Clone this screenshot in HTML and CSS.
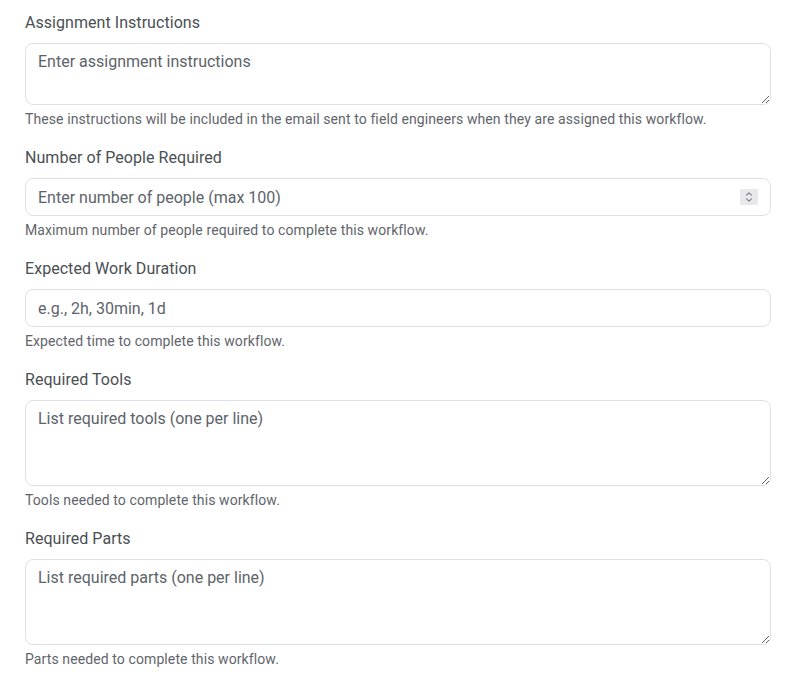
FILE: index.html
```html
<!DOCTYPE html>
<html lang="en">
<head>
<meta charset="utf-8">
<title>Workflow assignment</title>
<link rel="stylesheet" href="styles.css">
</head>
<body>
<form class="form">
  <div class="group">
    <label class="label" for="instructions">Assignment Instructions</label>
    <textarea class="control" id="instructions" rows="2" placeholder="Enter assignment instructions"></textarea>
    <div class="help">These instructions will be included in the email sent to field engineers when they are assigned this workflow.</div>
  </div>
  <div class="group">
    <label class="label" for="people">Number of People Required</label>
    <div class="number-wrap">
      <input class="control number" id="people" type="number" min="1" max="100" placeholder="Enter number of people (max 100)">
      <span class="spinner" aria-hidden="true">
        <svg width="18" height="16" viewBox="0 0 18 16">
          <path d="M6.5 6.2 L9 3.8 L11.5 6.2" fill="none" stroke="#7a7a80" stroke-width="1.1" stroke-linecap="round" stroke-linejoin="round"/>
          <path d="M6.5 9.8 L9 12.2 L11.5 9.8" fill="none" stroke="#7a7a80" stroke-width="1.1" stroke-linecap="round" stroke-linejoin="round"/>
        </svg>
      </span>
    </div>
    <div class="help">Maximum number of people required to complete this workflow.</div>
  </div>
  <div class="group">
    <label class="label" for="duration">Expected Work Duration</label>
    <input class="control" id="duration" type="text" placeholder="e.g., 2h, 30min, 1d">
    <div class="help">Expected time to complete this workflow.</div>
  </div>
  <div class="group">
    <label class="label" for="tools">Required Tools</label>
    <textarea class="control" id="tools" rows="3" placeholder="List required tools (one per line)"></textarea>
    <div class="help">Tools needed to complete this workflow.</div>
  </div>
  <div class="group">
    <label class="label" for="parts">Required Parts</label>
    <textarea class="control" id="parts" rows="3" placeholder="List required parts (one per line)"></textarea>
    <div class="help">Parts needed to complete this workflow.</div>
  </div>
</form>
</body>
</html>
```
FILE: styles.css
```css
html, body {
  margin: 0;
  padding: 0;
  background: #fff;
}
body {
  font-family: Roboto, "Liberation Sans", sans-serif;
  color: #495057;
}
.form {
  display: flex;
  flex-direction: column;
  gap: 16px;
  padding: 11px 25px 0;
}
.group {
  display: flex;
  flex-direction: column;
}
.label {
  font-size: 16px;
  line-height: 24px;
  color: #4a4f54;
  margin-bottom: 8px;
  letter-spacing: 0.05px;
}
.control {
  box-sizing: border-box;
  width: 100%;
  margin: 0;
  padding: 6px 12px;
  font-family: inherit;
  font-size: 16px;
  line-height: 24px;
  color: #212529;
  background: #fff;
  border: 1px solid #dee2e6;
  border-radius: 8px;
  outline: none;
  resize: vertical;
}
input.control {
  height: 38px;
}
.control::placeholder {
  color: #5d636a;
  opacity: 1;
}
.number-wrap {
  position: relative;
}
.number {
  padding-right: 40px;
  -moz-appearance: textfield;
}
.number::-webkit-inner-spin-button,
.number::-webkit-outer-spin-button {
  -webkit-appearance: none;
  margin: 0;
}
.spinner {
  position: absolute;
  right: 13px;
  top: 11px;
  width: 18px;
  height: 16px;
  background: #e9e9ed;
  border-radius: 1px;
  display: flex;
}
.help {
  margin-top: 4px;
  font-size: 14px;
  line-height: 21px;
  color: #5f656b;
  letter-spacing: 0.1px;
}
```
